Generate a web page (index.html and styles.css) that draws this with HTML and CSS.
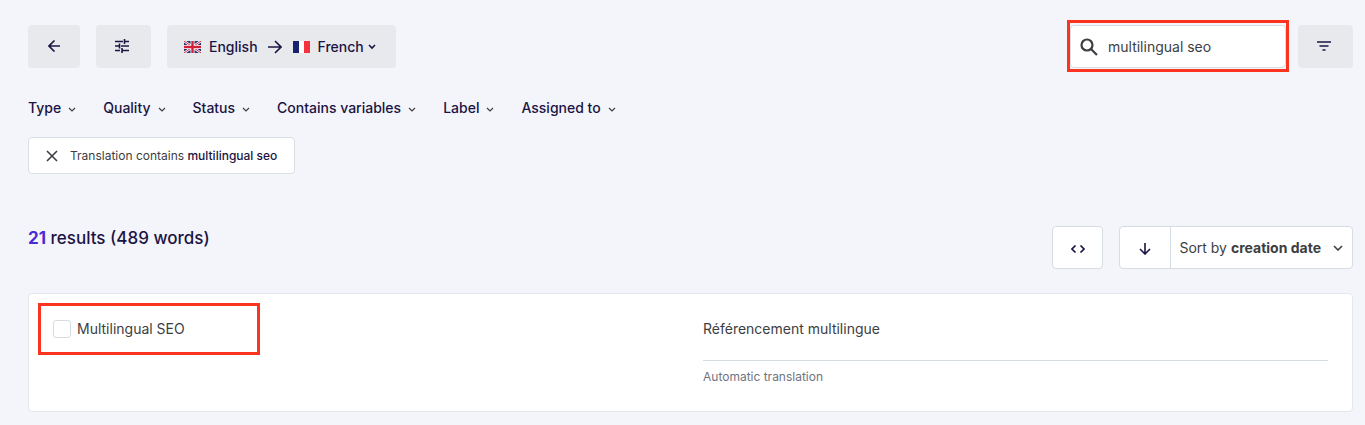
FILE: index.html
```html
<!DOCTYPE html>
<html lang="en">
<head>
	<meta charset="UTF-8">
	<meta name="viewport" content="width=device-width, initial-scale=1">
	<title>Translations - English to French</title>
	<link rel="stylesheet" href="styles.css">
</head>
<body>
	<header class="toolbar">
		<button type="button" class="btn btn-back" aria-label="Back">
			<svg width="12" height="12" viewBox="0 0 12 12"><path d="M12 6H1M6.500 .500L1 6l5.500 5.500"/></svg>
		</button>
		<button type="button" class="btn btn-settings" aria-label="Settings">
			<svg width="14" height="14" viewBox="0 0 14 14"><path d="M0 2.500h8M10 2.500h4M9.500 0v5M0 7h4M4.500 4.500v5M6 7h8M0 11.500h5M7 11.500h7M7 9v5"/></svg>
		</button>
		<button type="button" class="btn btn-lang" aria-haspopup="true">
			<svg class="flag" width="17" height="12" viewBox="0 0 17 12">
				<path class="uk-blue" d="M0 0h17v12H0z"/>
				<path class="uk-cross-white" d="M0 0l17 12M17 0L0 12"/>
				<path class="uk-cross-red" d="M0 0l17 12M17 0L0 12"/>
				<path class="uk-bar-white" d="M8.500 0v12M0 6h17"/>
				<path class="uk-bar-red" d="M8.500 0v12M0 6h17"/>
			</svg>
			<span>English</span>
			<svg class="lang-arrow" width="14" height="14" viewBox="0 0 14 14"><path d="M0 7h13M7 1l6 6-6 6"/></svg>
			<svg class="flag" width="17" height="12" viewBox="0 0 17 12">
				<path class="fr-blue" d="M0 0h6v12H0z"/>
				<path class="fr-white" d="M6 0h5v12H6z"/>
				<path class="fr-red" d="M11 0h6v12h-6z"/>
			</svg>
			<span>French</span>
			<svg class="chevron" width="8" height="6" viewBox="0 0 8 6"><path d="M1 1l3 3 3-3"/></svg>
		</button>
		<div class="highlight search-highlight">
			<label class="search">
				<svg width="18" height="18" viewBox="0 0 18 18"><circle cx="7" cy="7" r="5.500"/><path d="M11 11l6 6"/></svg>
				<input type="text" value="multilingual seo" aria-label="Search">
			</label>
		</div>
		<button type="button" class="btn btn-filter" aria-label="Filter">
			<svg width="14" height="10" viewBox="0 0 14 10"><path d="M0 1h14M2.500 5h9M5.500 9h3"/></svg>
		</button>
	</header>

	<nav class="filters">
		<button type="button">Type <svg width="8" height="6" viewBox="0 0 8 6"><path d="M1 1l3 3 3-3"/></svg></button>
		<button type="button">Quality <svg width="8" height="6" viewBox="0 0 8 6"><path d="M1 1l3 3 3-3"/></svg></button>
		<button type="button">Status <svg width="8" height="6" viewBox="0 0 8 6"><path d="M1 1l3 3 3-3"/></svg></button>
		<button type="button">Contains variables <svg width="8" height="6" viewBox="0 0 8 6"><path d="M1 1l3 3 3-3"/></svg></button>
		<button type="button">Label <svg width="8" height="6" viewBox="0 0 8 6"><path d="M1 1l3 3 3-3"/></svg></button>
		<button type="button">Assigned to <svg width="8" height="6" viewBox="0 0 8 6"><path d="M1 1l3 3 3-3"/></svg></button>
	</nav>

	<div class="chip">
		<button type="button" aria-label="Remove filter">
			<svg width="12" height="12" viewBox="0 0 12 12"><path d="M1 1l10 10M11 1L1 11"/></svg>
		</button>
		<span>Translation contains <b>multilingual seo</b></span>
	</div>

	<div class="results-bar">
		<h1><b>21</b> results (489 words)</h1>
		<button type="button" class="btn-white" aria-label="Show code">
			<svg width="14" height="8" viewBox="0 0 14 8"><path d="M4.500 .500L1 4l3.500 3.500M9.500 .500L13 4l-3.500 3.500"/></svg>
		</button>
		<div class="sort">
			<button type="button" aria-label="Sort direction">
				<svg width="12" height="12" viewBox="0 0 12 12"><path d="M6 0v11M1 6l5 5 5-5"/></svg>
			</button>
			<label for="sort-by">Sort by</label>
			<select id="sort-by">
				<option>creation date</option>
			</select>
			<svg class="sort-chevron" width="10" height="6" viewBox="0 0 10 6"><path d="M1 1l4 4 4-4"/></svg>
		</div>
	</div>

	<main class="card">
		<div class="source">
			<label class="highlight check">
				<input type="checkbox">
				<span>Multilingual SEO</span>
			</label>
		</div>
		<div class="translation">
			<p>Référencement multilingue</p>
			<small>Automatic translation</small>
		</div>
	</main>
</body>
</html>
```
FILE: styles.css
```css
* {
	box-sizing: border-box;
}

body {
	margin: 0;
	padding: 20px 12px 12px 28px;
	background: #f4f5fa;
	color: #3d3e42;
	font-family: Inter, sans-serif;
	font-size: 14px;
	line-height: 20px;
}

button, input, select {
	font: inherit;
	color: inherit;
	margin: 0;
}

button {
	padding: 0;
	border: 0;
	background: none;
	color: #1b1444;
	cursor: pointer;
}

svg {
	flex: none;
	fill: none;
	stroke: currentColor;
	stroke-width: 1.6;
}

.highlight {
	border: 3px solid #fb3420;
}

/* toolbar */
.toolbar {
	display: flex;
	align-items: center;
	gap: 16px;
}

.btn {
	display: flex;
	align-items: center;
	justify-content: center;
	width: 55px;
	height: 43px;
	border-radius: 4px;
	background: #e8e9ed;
	font-weight: 500;
}

.btn-back {
	width: 52px;
}

.btn-settings {
	padding-right: 4px;
}

.btn-filter {
	padding-right: 4px;
}

.btn-lang {
	width: auto;
	padding: 2px 20px 0 17px;
	gap: 8px;
}

.lang-arrow {
	margin: 0 3px 0 2px;
}

.btn-lang .chevron {
	margin-left: -4px;
}

.flag {
	stroke: none;
}
.uk-blue { fill: #22306f; }
.uk-cross-white { stroke: #fff; stroke-width: 2.5; }
.uk-cross-red { stroke: #d2203a; stroke-width: 1; }
.uk-bar-white { stroke: #fff; stroke-width: 4; }
.uk-bar-red { stroke: #d2203a; stroke-width: 2.4; }
.fr-blue { fill: #1a2370; }
.fr-white { fill: #fff; }
.fr-red { fill: #f5333f; }

.search-highlight {
	width: 222px;
	margin-left: auto;
	margin-right: -7px;
	padding: 2px 0 1px;
}

.search {
	display: flex;
	align-items: center;
	gap: 10px;
	height: 43px;
	padding: 0 10px 0 9px;
	border: 1px solid #d5dde3;
	border-radius: 4px;
	background: #fff;
}

.search svg {
	stroke-width: 2.2;
}

.search input {
	flex: 1;
	min-width: 0;
	padding: 0;
	border: 0;
	outline: 0;
	background: none;
}

/* filters */
.filters {
	display: flex;
	flex-wrap: wrap;
	gap: 27px;
	margin-top: 26px;
}

.filters button {
	display: flex;
	align-items: center;
	gap: 7px;
	font-weight: 500;
}

.filters svg {
	margin-top: 3px;
	stroke: #3d3e42;
	stroke-width: 1.2;
}

.chip {
	display: inline-flex;
	align-items: center;
	gap: 12px;
	height: 37px;
	margin-top: 19px;
	padding: 0 17px;
	border: 1px solid #dadfe5;
	border-radius: 4px;
	background: #fff;
	font-size: 12px;
}

.chip button {
	display: flex;
	color: #3d3e42;
}

.chip b {
	color: #1b1444;
	font-weight: 500;
}

/* results */
.results-bar {
	display: flex;
	align-items: center;
	gap: 16px;
	margin-top: 52px;
}

.results-bar h1 {
	align-self: flex-start;
	margin: 2px auto 0 0;
	color: #1b1444;
	font-size: 17px;
	font-weight: 500;
}

.results-bar h1 b {
	color: #4b2bd4;
	font-weight: 700;
}

.btn-white, .sort {
	display: flex;
	align-items: center;
	justify-content: center;
	height: 43px;
	border: 1px solid #d5dde3;
	border-radius: 4px;
	background: #fff;
}

.btn-white {
	width: 51px;
	padding-top: 3px;
}

.sort > button {
	display: flex;
	align-items: center;
	justify-content: center;
	width: 51px;
	height: 41px;
	padding-top: 3px;
	border-right: 1px solid #d5dde3;
}

.sort label {
	padding: 0 4px 0 8px;
}

.sort select {
	appearance: none;
	padding: 0;
	border: 0;
	background: none;
	font-weight: 700;
}

.sort-chevron {
	margin: 0 9px 0 11px;
}

/* translation card */
.card {
	display: flex;
	margin-top: 24px;
	padding: 9px 24px 24px 9px;
	border: 1px solid #e3e6eb;
	border-radius: 4px;
	background: #fff;
}

.source {
	flex: 1;
}

.check {
	display: flex;
	align-items: center;
	gap: 6px;
	width: 222px;
	height: 52px;
	padding-left: 12px;
}

.check input {
	appearance: none;
	width: 18px;
	height: 18px;
	border: 1px solid #d5dde3;
	border-radius: 3px;
}

.translation {
	width: 625px;
	padding-top: 16px;
}

.translation p {
	margin: 0 0 6px;
	padding-bottom: 21px;
	border-bottom: 1px solid #d5dde3;
}

.translation small {
	display: block;
	color: #6f7480;
	font-size: 12px;
}
```
